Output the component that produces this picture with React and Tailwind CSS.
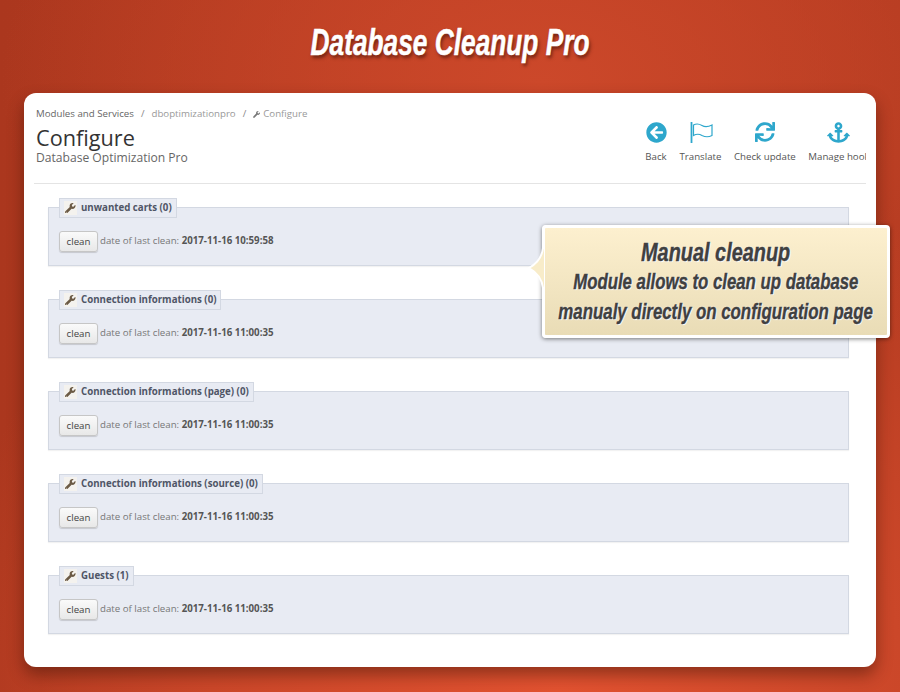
import { FaArrowCircleLeft, FaSync, FaAnchor, FaWrench } from 'react-icons/fa'

const sections = [
  { title: 'unwanted carts (0)', date: '2017-11-16 10:59:58' },
  { title: 'Connection informations (0)', date: '2017-11-16 11:00:35' },
  { title: 'Connection informations (page) (0)', date: '2017-11-16 11:00:35' },
  { title: 'Connection informations (source) (0)', date: '2017-11-16 11:00:35' },
  { title: 'Guests (1)', date: '2017-11-16 11:00:35' },
]

function FlagIcon() {
  return (
    <svg className="ml-[2px]" width="23" height="21" viewBox="0 0 23 21" fill="none" stroke="#2ea7cc" strokeWidth="1.2">
      <path d="M1.5 0V21" strokeWidth="1.8" />
      <path d="M3.5 3C7 1 9.500 2 12 3.500C14.500 5 18 5 22 3V13.500C18 15.500 15 15 12 13.500C9.500 12 7 11.500 3.500 13.500Z" />
    </svg>
  )
}

function ToolbarItem({ icon, label }) {
  return (
    <div className="flex shrink-0 flex-col items-center gap-[6px]">
      <div className="flex h-[24px] items-center">{icon}</div>
      <span className="whitespace-nowrap text-[9.7px] leading-[14px] text-[#555]">{label}</span>
    </div>
  )
}

function CleanSection({ title, date }) {
  return (
    <div className="relative h-[59px] border border-[#d3d8e2] bg-[#e8ebf3] pl-[10px] pt-[23px] shadow-[0_1px_1px_rgba(0,0,0,0.05)]">
      <div className="absolute left-[10px] top-[-10px] flex h-[20px] items-center gap-[4px] border border-[#d3d8e2] bg-[#e8ebf3] pl-[4px] pr-[4px]">
        <span className="flex h-[14px] w-[13px] items-center justify-center bg-[#f4f2ee]">
          <FaWrench className="text-[10.500px] text-[#6b5a45]" />
        </span>
        <span className="whitespace-nowrap text-[9.7px] font-bold text-[#4f5566]">{title}</span>
      </div>
      <div className="flex items-center gap-[2px]">
        <button className="h-[21px] w-[39px] rounded-[3px] border border-[#c6c6c6] bg-gradient-to-b from-[#fafafa] to-[#e8e8e8] text-[9.7px] leading-none text-[#444] shadow-[0_1px_1px_rgba(0,0,0,0.15)]">
          clean
        </button>
        <p className="whitespace-nowrap text-[9.7px] text-[#777]">
          date of last clean: <b className="font-bold text-[#555]">{date}</b>
        </p>
      </div>
    </div>
  )
}

function SqueezedLine({ className, children }) {
  return (
    <div className={`flex justify-center whitespace-nowrap ${className}`}>
      <span className="shrink-0 scale-x-[0.78]">{children}</span>
    </div>
  )
}

export default function App() {
  return (
    <div className="relative h-[692px] w-[900px] overflow-hidden bg-[radial-gradient(ellipse_70%_80%_at_62%_100%,#e25230_0%,#cb4729_55%,transparent_100%),radial-gradient(ellipse_60%_50%_at_60%_12%,#cc482a_0%,transparent_100%),linear-gradient(90deg,#ab371e_0%,#b93d22_50%,#b23a20_100%)] font-['Open_Sans',sans-serif]">
      <h1 className="flex h-[93px] items-start justify-center whitespace-nowrap pt-[21px] font-['Liberation_Sans',sans-serif] text-[36px] font-bold italic leading-[44px] text-white [-webkit-text-stroke:0.5px_#fff] [text-shadow:2px_3px_4px_rgba(60,15,5,0.6)]">
        <span className="shrink-0 scale-x-[0.73]">Database Cleanup Pro</span>
      </h1>

      <div className="mx-[24px] h-[574px] rounded-[12px] bg-white px-[10px] shadow-[0_8px_16px_rgba(50,15,5,0.45)]">
        <div className="flex h-[91px] border-b border-[#e4e4e4]">
          <div className="pl-[2px] pt-[14px]">
            <div className="flex items-center text-[9.7px] leading-[14px]">
              <span className="text-[#666]">Modules and Services</span>
              <span className="mx-[7px] text-[#888]">/</span>
              <span className="text-[#999]">dboptimizationpro</span>
              <span className="mx-[7px] text-[#888]">/</span>
              <FaWrench className="mr-[3px] text-[7px] text-[#777]" />
              <span className="text-[#999]">Configure</span>
            </div>
            <div className="mt-[4px] text-[21.700px] leading-[25px] text-[#333]">Configure</div>
            <div className="pt-[1px] text-[12.100px] leading-[14px] text-[#666]">Database Optimization Pro</div>
          </div>
          <div className="ml-auto mt-[27px] flex h-[46px] w-[221px] gap-[12.500px] overflow-hidden">
            <ToolbarItem icon={<FaArrowCircleLeft className="ml-[1px] text-[21px] text-[#2ea7cc]" />} label="Back" />
            <ToolbarItem icon={<FlagIcon />} label="Translate" />
            <ToolbarItem icon={<FaSync className="text-[20px] text-[#2ea7cc]" />} label="Check update" />
            <ToolbarItem icon={<FaAnchor className="text-[23px] text-[#2ea7cc]" />} label="Manage hook" />
          </div>
        </div>

        <div className="flex flex-col gap-[33px] pl-[14px] pr-[17px] pt-[23px]">
          {sections.map((s) => (
            <CleanSection key={s.title} title={s.title} date={s.date} />
          ))}
        </div>
      </div>

      {/* Callout */}
      <div className="absolute left-[542px] top-[225px] h-[113px] w-[348px] rounded-[4px] border-[3px] border-white bg-gradient-to-b from-[#fdf0cf] to-[#e9dcb6] font-['Liberation_Sans',sans-serif] font-bold italic text-[#404040] shadow-[0_1px_4px_rgba(0,0,0,0.5)] [-webkit-text-stroke:0.4px_#404040] [text-shadow:0_0_2px_#fff,1px_1px_1px_#fff]">
        <svg className="absolute left-[-17px] top-[19px]" width="17" height="42" viewBox="0 0 17 42">
          <path d="M15 1C14 10 10 16 1 21C10 26 14 32 15 41H17V1Z" fill="#f8ecc9" stroke="#fff" strokeWidth="2" />
        </svg>
        <SqueezedLine className="pt-[9px] text-[25.500px] leading-[30px]">Manual cleanup</SqueezedLine>
        <SqueezedLine className="text-[21.500px] leading-[30px]">Module allows to clean up database</SqueezedLine>
        <SqueezedLine className="text-[21.600px] leading-[29px]">manualy directly on configuration page</SqueezedLine>
      </div>
    </div>
  )
}
